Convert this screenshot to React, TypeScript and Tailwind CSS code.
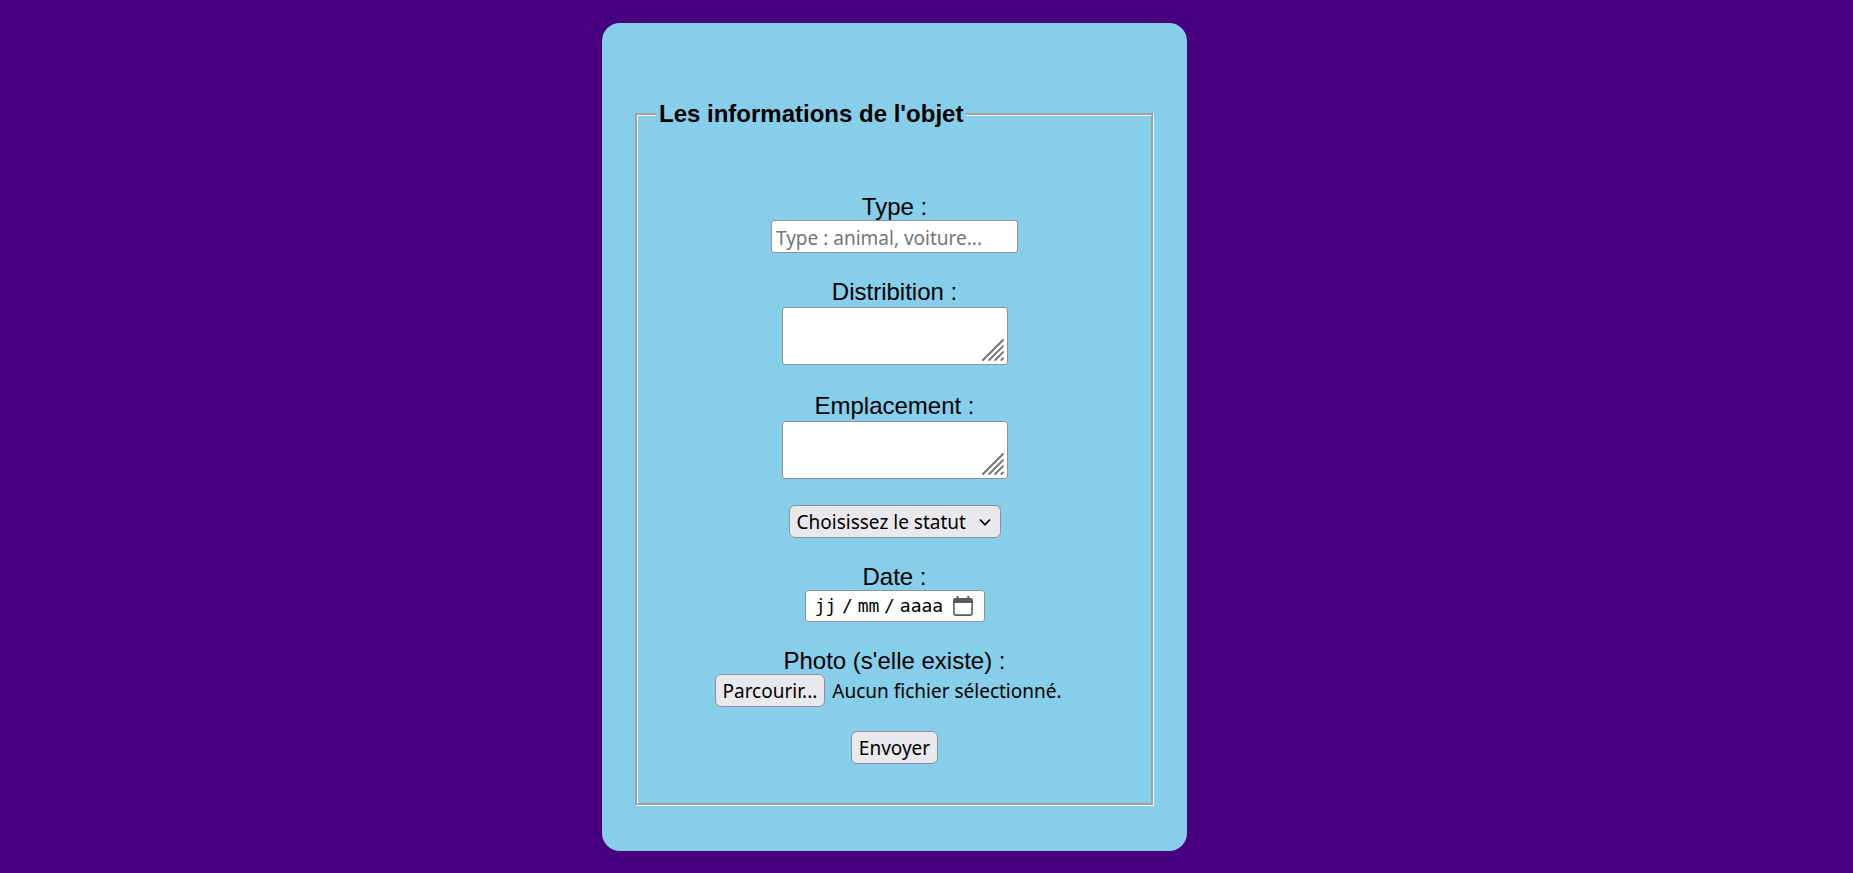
import { useRef, useState } from "react";
import type { ReactNode } from "react";

const controlFont = "font-['Noto_Sans',sans-serif]";
const box = "rounded-[3px] border border-[#8f8f9d] bg-white";
const buttonBox =
  "h-[33px] cursor-pointer rounded-md border border-[#8f8f9d] bg-[#e9e9ed] px-[7px] pt-0.5 text-[19px] leading-[29px] text-black hover:bg-[#d0d0d7]";

function Field({ id, label, children }: { id: string; label: string; children: ReactNode }) {
  return (
    <div className="flex flex-col items-center">
      <label htmlFor={id} className="pt-0.5 leading-[26px]">
        {label}
      </label>
      {children}
    </div>
  );
}

function TextArea({ id }: { id: string }) {
  return (
    <div className="relative my-0.5 h-[58px] w-[226px]">
      <textarea id={id} name={id} className={`${box} ${controlFont} block size-full resize-none px-1 text-[19px]`} />
      <svg
        className="pointer-events-none absolute right-1 bottom-1 size-[22px]"
        viewBox="0 0 22 22"
        stroke="#6f6f6f"
        strokeWidth="1.8"
        strokeLinecap="round"
        aria-hidden="true"
      >
        <path d="M1 21 21 1M7.2 21 21 7.2M13.2 21 21 13.2M19.4 21 21 19.4" />
      </svg>
    </div>
  );
}

const segment = "bg-transparent p-0 text-center outline-none placeholder:text-black placeholder:opacity-100";

function DateInput({ id }: { id: string }) {
  return (
    <div
      role="group"
      aria-label="Date"
      className={`${box} flex h-8 w-[180px] items-center pr-[11px] pl-2 font-['DejaVu_Sans_Mono',monospace] text-lg leading-6`}
    >
      <input id={id} placeholder="jj" maxLength={2} className={`${segment} w-6`} />
      <span className="w-5 text-center">/</span>
      <input placeholder="mm" aria-label="Mois" maxLength={2} className={`${segment} w-[22px]`} />
      <span className="w-5 text-center">/</span>
      <input placeholder="aaaa" aria-label="Année" maxLength={4} className={`${segment} w-11`} />
      <button type="button" aria-label="Ouvrir le calendrier" className="ml-auto cursor-pointer">
        <svg className="size-5" viewBox="0 0 20 20" fill="none" aria-hidden="true">
          <rect x="0.9" y="2.9" width="18.2" height="16.2" rx="2.2" stroke="#5b5b5b" strokeWidth="1.6" />
          <path d="M0.2 7V4Q0.2 2 2.2 2H17.8Q19.8 2 19.8 4V7ZM3.6 0H5.6V3H3.6ZM14.4 0H16.4V3H14.4Z" fill="#5b5b5b" />
        </svg>
      </button>
    </div>
  );
}

function FileInput({ id }: { id: string }) {
  const input = useRef<HTMLInputElement>(null);
  const [fileName, setFileName] = useState("Aucun fichier sélectionné.");
  return (
    <div className={`${controlFont} relative flex w-[360px] items-center gap-[7px] text-[19px]`}>
      <input
        ref={input}
        id={id}
        name={id}
        type="file"
        className="sr-only"
        onChange={(e) => setFileName(e.target.files?.[0]?.name ?? "Aucun fichier sélectionné.")}
      />
      <button type="button" className={buttonBox} onClick={() => input.current?.click()}>
        Parcourir...
      </button>
      <span className="truncate pt-0.5">{fileName}</span>
    </div>
  );
}

export default function App() {
  return (
    <main className="flex min-h-screen items-center justify-center bg-[#4b0082] py-[23px] pr-16 font-['Liberation_Sans',Arial,sans-serif] text-2xl text-black">
      <form
        className="w-full max-w-[585px] rounded-[18px] bg-[#87ceeb] px-[33px] pt-[77px] pb-[45px] shadow-[0_0_24px_rgba(0,0,0,0.1)]"
        onSubmit={(e) => e.preventDefault()}
      >
        <fieldset className="border-[3px] border-[#f4f4f4] px-[18px] pb-[39px] [border-style:groove]">
          <legend className="px-[3px] leading-7 font-bold">Les informations de l'objet</legend>
          <div className="flex flex-col items-center gap-6 pt-16">
            <Field id="type" label="Type :">
              <input
                id="type"
                name="type"
                type="text"
                placeholder="Type : animal, voiture..."
                className={`${box} ${controlFont} h-[33px] w-[247px] px-1 pt-0.5 text-[19px] placeholder:text-[#757575]`}
              />
            </Field>
            <Field id="distribution" label="Distribition :">
              <TextArea id="distribution" />
            </Field>
            <Field id="emplacement" label="Emplacement :">
              <TextArea id="emplacement" />
            </Field>
            <div className="relative">
              <select aria-label="Statut" name="statut" className={`${buttonBox} ${controlFont} block w-[212px] appearance-none`}>
                <option>Choisissez le statut</option>
                <option>Perdu</option>
                <option>Trouvé</option>
              </select>
              <svg
                className="pointer-events-none absolute top-3 right-2.5 h-2.5 w-3"
                viewBox="0 0 12 10"
                fill="none"
                stroke="black"
                strokeWidth="1.8"
                aria-hidden="true"
              >
                <path d="M1 2.5 6 7.8 11 2.5" />
              </svg>
            </div>
            <Field id="date" label="Date :">
              <DateInput id="date" />
            </Field>
            <Field id="photo" label="Photo (s'elle existe) :">
              <FileInput id="photo" />
            </Field>
            <button type="submit" className={`${buttonBox} ${controlFont}`}>
              Envoyer
            </button>
          </div>
        </fieldset>
      </form>
    </main>
  );
}
